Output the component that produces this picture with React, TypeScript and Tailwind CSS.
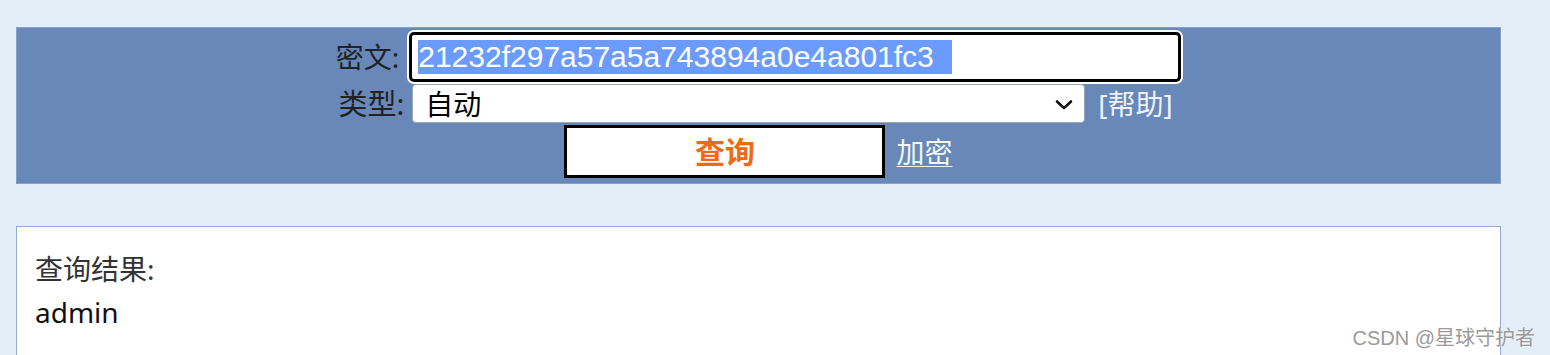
const cjk = "font-['Noto_Sans','Noto_Sans_CJK_SC',sans-serif]";

function Chevron(): React.ReactElement {
  return (
    <svg width="20" height="12" viewBox="0 0 20 12" className="absolute right-[10px] top-[14px]">
      <path d="M3 2.5 L10 9 L17 2.5" fill="none" stroke="#111" strokeWidth="2.6" strokeLinecap="round" strokeLinejoin="round" />
    </svg>
  );
}

export default function App(): React.ReactElement {
  return (
    <div className={`relative h-[355px] overflow-hidden bg-[#e3eef8] pt-[27px] ${cjk}`}>
      {/* query form */}
      <section className="ml-[16px] h-[157px] w-[1485px] border border-[#86a0c8] bg-[#6788b8] pt-[3px]">
        <div className="flex h-[52px] items-center justify-center">
          <span className="text-[28px] leading-none text-[#222]">密文:</span>
          <div className="ml-[10px] flex h-[50px] w-[772px] items-center rounded-[5px] border-[3px] border-black bg-white pl-[6px] shadow-[0_0_0_2px_#ffffff]">
            <span className="bg-[#6b9bff] pr-[18px] font-['Liberation_Sans',Arial,sans-serif] text-[30px] leading-[34px] text-white">
              21232f297a57a5a743894a0e4a801fc3
            </span>
          </div>
        </div>
        <div className="flex h-[41px] items-center justify-center pr-[6px]">
          <span className="text-[29px] leading-none text-[#222]">类型:</span>
          <div className="relative ml-[8px] flex h-[39px] w-[673px] items-center rounded-[4px] border border-[#9aa6b4] bg-white pl-[12px]">
            <span className="text-[28px] leading-none text-black">自动</span>
            <Chevron />
          </div>
          <span className="ml-[13px] text-[28px] leading-none text-[#eef2f8]">[帮助]</span>
        </div>
        <div className="flex h-[55px] items-center justify-center">
          <button className="flex h-[53px] w-[321px] items-center justify-center border-[3px] border-black bg-white text-[30px] font-bold text-[#f06a12]">
            查询
          </button>
          <a className="ml-[11px] text-[28px] leading-none text-[#f3f6fa] underline decoration-1 underline-offset-[3px]">加密</a>
        </div>
      </section>

      {/* result */}
      <section className="ml-[16px] mt-[42px] h-[200px] w-[1485px] border border-[#93acd3] bg-white pl-[18px] pt-[21px] text-[28px] leading-[43px] text-[#333]">
        <div>查询结果:</div>
        <div className="text-[#111]">admin</div>
      </section>

      <span className="absolute bottom-[7px] right-[15px] font-['Liberation_Sans','Noto_Sans_CJK_SC',sans-serif] text-[20px] leading-none text-[#9a9a9a] [text-shadow:0_0_2px_#ffffff]">
        CSDN @星球守护者
      </span>
    </div>
  );
}
